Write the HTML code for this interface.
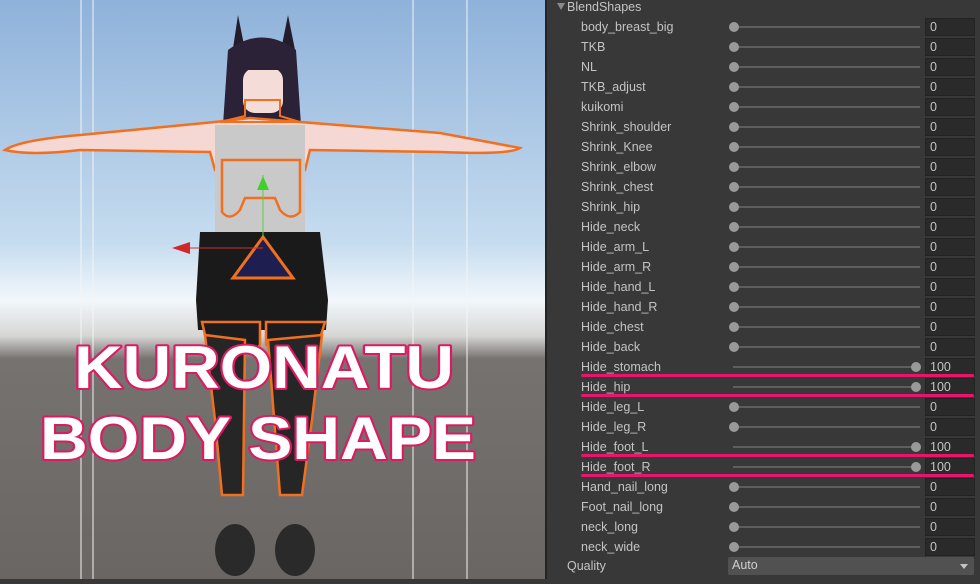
<!DOCTYPE html>
<html><head><meta charset="utf-8"><style>
*{margin:0;padding:0;box-sizing:border-box}
body{width:980px;height:579px;overflow:hidden;background:#383838;font-family:"Liberation Sans",sans-serif;position:relative}
#vp{position:absolute;left:0;top:0;width:545px;height:579px}
#pn{position:absolute;left:545px;top:0;width:435px;height:579px;background:#383838;border-left:2px solid #242424}
.r{position:absolute;left:0;width:435px;height:20px;color:#c4c4c4;font-size:12.5px}
.r .l{position:absolute;left:34px;top:3px}
.r .t{position:absolute;left:186px;top:9px;width:187px;height:2px;background:#5e5e5e}
.r .k{position:absolute;top:5px;width:10px;height:10px;border-radius:50%;background:#999}
.r .n{position:absolute;left:378px;top:1px;width:50px;height:18px;background:#2a2a2a;border:1px solid #232323;padding-left:4px;line-height:16px}
.pk{position:absolute;left:34px;width:393px;height:3px;background:#e8166a;border-radius:2px}
</style></head><body>
<div id="vp"><svg width="545" height="579" viewBox="0 0 545 579">
<defs><linearGradient id="sky" x1="0" y1="0" x2="0" y2="1">
<stop offset="0" stop-color="#8fb2da"/><stop offset="0.42" stop-color="#c6dcef"/><stop offset="0.52" stop-color="#f2f7fb"/><stop offset="0.58" stop-color="#d6d6d4"/><stop offset="0.62" stop-color="#767270"/><stop offset="1" stop-color="#6a6664"/></linearGradient></defs>
<rect width="545" height="579" fill="url(#sky)"/>
<g stroke="#f4f4f4" stroke-width="1"><line x1="81" y1="0" x2="81" y2="579"/><line x1="93" y1="0" x2="93" y2="579"/><line x1="413" y1="0" x2="413" y2="579"/><line x1="467" y1="0" x2="467" y2="579"/></g>
<path d="M238 15 L244 45 L232 55 Z M288 15 L282 45 L296 55 Z" fill="#231c2a"/>
<path d="M228 50 Q262 25 296 50 L302 140 L222 140 Z" fill="#2b2238"/>
<rect x="243" y="68" width="40" height="45" rx="12" fill="#f4dcd8"/>
<path d="M228 60 L296 60 L296 70 L228 70 Z" fill="#2b2238"/>
<path d="M5 150 Q20 140 80 135 L215 122 L250 118 L300 122 L440 133 L520 148 Q510 155 440 152 L310 150 L305 170 L215 170 L210 152 L80 150 Q30 156 5 150 Z" fill="#f5d8d4" stroke="#f07020" stroke-width="2.5"/>
<path d="M215 125 L305 125 L305 232 L215 232 Z" fill="#c9c9c9"/>
<path d="M222 160 L300 160 L300 212 Q290 222 280 210 L275 198 L245 198 L240 210 Q230 222 222 212 Z" fill="none" stroke="#f07020" stroke-width="2.5"/>
<path d="M245 100 L280 100 L280 116 L300 122 L220 122 L245 116 Z" fill="none" stroke="#f07020" stroke-width="2"/>
<path d="M200 232 L320 232 L328 300 L326 330 L198 330 L196 300 Z" fill="#1a1a1a"/>
<path d="M263 237 L293 278 L233 278 Z" fill="#1e1e50" stroke="#f07020" stroke-width="3"/>
<line x1="263" y1="175" x2="263" y2="237" stroke="#5ad040" stroke-width="1"/>
<path d="M263 176 L269 190 L257 190 Z" fill="#3fd02a"/>
<line x1="185" y1="248" x2="263" y2="248" stroke="#d03030" stroke-width="1"/>
<path d="M172 248 L190 242 L190 254 Z" fill="#d02828"/>
<path d="M202 322 L260 322 L260 345 Q250 360 205 335 Z M266 322 L325 322 L318 345 Q300 360 266 345 Z" fill="#1c1c1c" stroke="#f07020" stroke-width="2.5"/>
<path d="M205 335 L245 340 L243 495 L222 495 L215 420 Z M268 340 L322 335 L312 420 L302 495 L280 495 Z" fill="#262626" stroke="#f07020" stroke-width="2.5"/>
<ellipse cx="235" cy="550" rx="20" ry="26" fill="#2a2a2a"/>
<ellipse cx="295" cy="550" rx="20" ry="26" fill="#2a2a2a"/>
<g font-family="Liberation Sans,sans-serif" font-weight="bold" font-size="60" fill="#fff" stroke="#dc1a62" stroke-width="4" stroke-linejoin="round" paint-order="stroke">
<text x="74" y="388" textLength="380" lengthAdjust="spacingAndGlyphs">KURONATU</text>
<text x="40" y="459" textLength="436" lengthAdjust="spacingAndGlyphs">BODY SHAPE</text>
</g>
</svg></div>
<div id="pn">
<div style="position:absolute;left:10px;top:3px;width:0;height:0;border-left:4px solid transparent;border-right:4px solid transparent;border-top:7px solid #8a8a8a"></div>
<div style="position:absolute;left:20px;top:0px;color:#c4c4c4;font-size:12.5px">BlendShapes</div>
<div id="rows"></div>
<div class="pk" style="top:374px"></div>
<div class="pk" style="top:394px"></div>
<div class="pk" style="top:454px"></div>
<div class="pk" style="top:474px"></div>
<div style="position:absolute;left:20px;top:559px;color:#c4c4c4;font-size:12.5px">Quality</div>
<div style="position:absolute;left:181px;top:557px;width:246px;height:18px;background:#515151;border-radius:2px;color:#d0d0d0;font-size:12.5px;padding:1px 4px">Auto<span style="position:absolute;right:6px;top:7px;border-left:4px solid transparent;border-right:4px solid transparent;border-top:5px solid #c4c4c4"></span></div>
</div>
<script>
var n=["body_breast_big","TKB","NL","TKB_adjust","kuikomi","Shrink_shoulder","Shrink_Knee","Shrink_elbow","Shrink_chest","Shrink_hip","Hide_neck","Hide_arm_L","Hide_arm_R","Hide_hand_L","Hide_hand_R","Hide_chest","Hide_back","Hide_stomach","Hide_hip","Hide_leg_L","Hide_leg_R","Hide_foot_L","Hide_foot_R","Hand_nail_long","Foot_nail_long","neck_long","neck_wide"];
var h="";n.forEach(function(s,i){var v=(s=="Hide_stomach"||s=="Hide_hip"||s=="Hide_foot_L"||s=="Hide_foot_R");
h+='<div class="r" style="top:'+(17+i*20)+'px"><span class="l">'+s+'</span><span class="t"></span><span class="k" style="left:'+(v?364:182)+'px"></span><span class="n">'+(v?100:0)+'</span></div>';});
document.getElementById("rows").innerHTML=h;
</script>
</body></html>
